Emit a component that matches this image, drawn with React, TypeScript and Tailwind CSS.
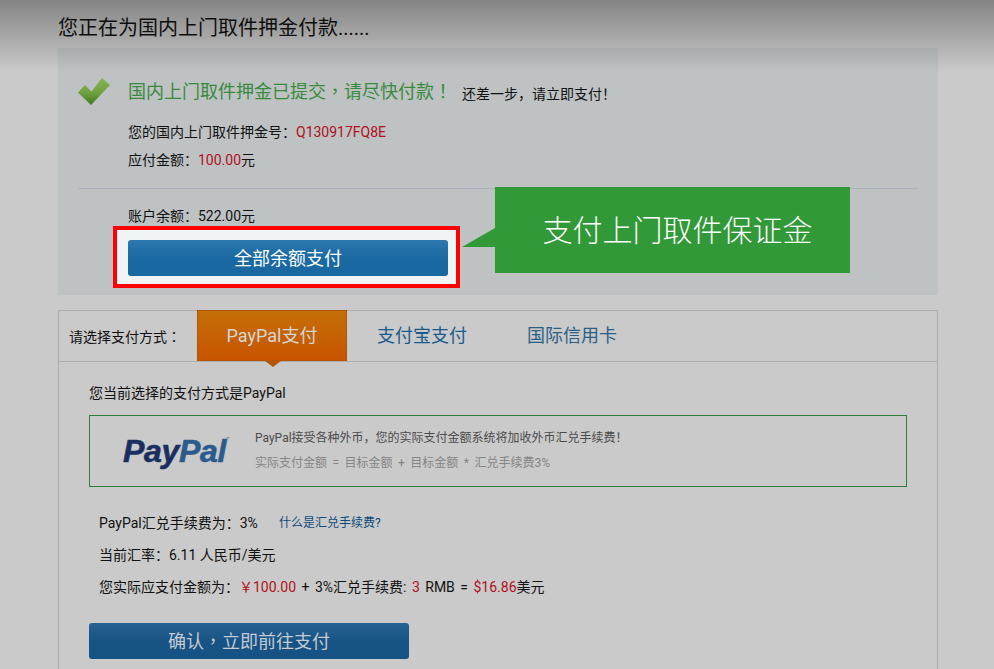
// fullwidth punctuation sits centred in the cell in the larger text
function Pun({ children }: { children: string }) {
  return <span className="[font-family:'Noto_Sans_CJK_TC',sans-serif]">{children}</span>;
}

export default function App() {
  return (
    <div className="relative w-[994px] h-[669px] overflow-hidden bg-[#cacaca] text-[14px] text-[#111] [font-family:'Roboto','Noto_Sans_CJK_SC',sans-serif]">
      {/* dark fade over the top of the page */}
      <div className="absolute left-0 top-0 w-full h-[72px] bg-gradient-to-b from-[#00000059] to-[#00000000] pointer-events-none z-10" />

      <h1 className="h-[48px] pl-[58px] pt-[14px] text-[20px] leading-[28px] font-normal text-[#111]">
        您正在为国内上门取件押金付款......
      </h1>

      <div className="relative ml-[58px] w-[880px] h-[247px] bg-[#bec2c3] pt-[26px]">
        <div className="flex items-center h-[34px] pl-[20px]">
          <CheckMark />
          <span className="ml-[18px] text-[18px] text-[#3a8a3e]">国内上门取件押金已提交<Pun>，</Pun>请尽快付款<Pun>！</Pun></span>
          <span className="ml-[10px] mt-[6px] text-[14px] text-[#111]">还差一步，请立即支付！</span>
        </div>
        <div className="mt-[10px] ml-[70px] h-[28px] leading-[28px]">
          您的国内上门取件押金号：<span className="text-[#b01020]">Q130917FQ8E</span>
        </div>
        <div className="ml-[70px] h-[28px] leading-[28px]">
          应付金额：<span className="text-[#b01020]">100.00</span>元
        </div>
        <div className="mt-[14px] mx-[20px] h-px bg-[#adb1bb]" />
        <div className="mt-[17px] ml-[70px] h-[20px] leading-[20px]">账户余额：522.00元</div>
        <div className="ml-[55px] w-[347px] h-[62px] border-4 border-[#ff0000] bg-[#f1f4f6] pt-[10px] pl-[11px]">
          <button className="block w-[320px] h-[36px] rounded-[3px] bg-gradient-to-b from-[#2b78ae] via-[#1b69a3] to-[#1a68a2] text-[18px] text-white">
            全部余额支付
          </button>
        </div>

        {/* callout */}
        <div className="absolute left-[437px] top-[139px] w-[355px] h-[86px] bg-[#319937] flex items-center justify-center pl-[10px] text-[30px] font-light text-white">
          支付上门取件保证金
        </div>
        <svg className="absolute left-[404px] top-[179px]" width="34" height="21" viewBox="0 0 34 21">
          <polygon points="0,20 33,1 34,1 34,20" fill="#319937" />
        </svg>
      </div>

      <div className="mt-[15px] ml-[58px] w-[880px] h-[400px] border border-[#adadad]">
        <div className="flex h-[51px] border-b border-[#adadad]">
          <div className="w-[138px] pl-[10px] leading-[50px] whitespace-nowrap">请选择支付方式<Pun>：</Pun></div>
          <div className="relative w-[150px] h-[51px] -mt-px border border-[#b25508] bg-gradient-to-b from-[#c46f08] to-[#c85300] text-center text-[18px] leading-[50px] text-[#d6d6d6]">
            PayPal支付
            <span className="absolute left-[67px] top-[50px] w-0 h-0 border-x-[8px] border-x-transparent border-t-[6px] border-t-[#b25508]" />
          </div>
          <div className="w-[150px] text-center text-[18px] leading-[50px] text-[#1a5a8c]">支付宝支付</div>
          <div className="w-[150px] text-center text-[18px] leading-[50px] text-[#2a5f86]">国际信用卡</div>
        </div>

        <div className="pl-[30px]">
          <div className="mt-[21px] h-[20px] leading-[20px]">您当前选择的支付方式是PayPal</div>
          <div className="mt-[12px] flex items-center w-[818px] h-[72px] border border-[#2f7d3b]">
            <div className="w-[165px] pl-[33px] flex items-start">
              <span className="text-[32px] leading-[36px] font-bold italic tracking-[-0.3px] text-[#1a2f60] [font-family:'Liberation_Sans',sans-serif] [-webkit-text-stroke:0.6px]">
                Pay<span className="text-[#2a5b8c]">Pal</span>
              </span>
              <span className="mt-[2px] text-[6px] leading-[8px] text-[#2a5b8c]">™</span>
            </div>
            <div className="text-[12px]">
              <div className="h-[25px] leading-[25px] text-[#4a4a4a]">PayPal接受各种外币，您的实际支付金额系统将加收外币汇兑手续费！</div>
              <div className="h-[25px] leading-[25px] text-[#858585] [word-spacing:2.5px]">实际支付金额 = 目标金额 + 目标金额 * 汇兑手续费3%</div>
            </div>
          </div>

          <div className="mt-[20px] pl-[10px]">
            <div className="h-[32px] leading-[32px] flex">
              <span className="w-[180px]">PayPal汇兑手续费为：3%</span>
              <span className="text-[12px] text-[#0f4a7a]">什么是汇兑手续费?</span>
            </div>
            <div className="h-[32px] leading-[32px]">当前汇率：6.11 人民币/美元</div>
            <div className="h-[32px] leading-[32px] [word-spacing:2px]">
              您实际应支付金额为：<span className="text-[#b01020]">￥100.00</span> + 3%汇兑手续费: <span className="text-[#b01020]">3</span> RMB = <span className="text-[#b01020]">$16.86</span>美元
            </div>
          </div>

          <button className="block mt-[20px] w-[320px] h-[36px] rounded-[3px] bg-gradient-to-b from-[#286392] via-[#175384] to-[#165283] text-[18px] text-[#c4cbd2]">
            确认<Pun>，</Pun>立即前往支付
          </button>
        </div>
      </div>
    </div>
  );
}

function CheckMark() {
  return (
    <svg width="32" height="27" viewBox="0 0 32 27" className="shrink-0">
      <defs>
        <linearGradient id="chk" x1="0" y1="0" x2="0" y2="1">
          <stop offset="0" stopColor="#86b552" />
          <stop offset="0.55" stopColor="#6fa040" />
          <stop offset="1" stopColor="#3f7a1f" />
        </linearGradient>
      </defs>
      <polygon points="0,14.5 7,7 13.5,13.5 24,0 32,7 13,27" fill="url(#chk)" />
    </svg>
  );
}
